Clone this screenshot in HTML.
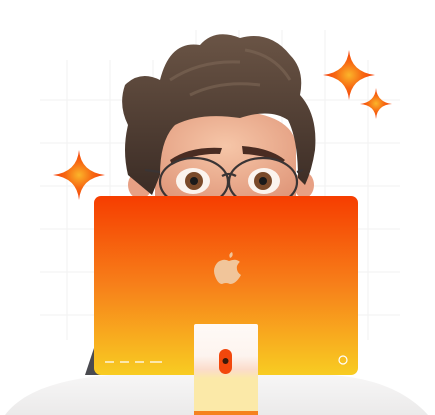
<!DOCTYPE html>
<html><head><style>html,body{margin:0;padding:0;background:#fff;width:435px;height:415px;overflow:hidden}</style></head>
<body>
<svg width="435" height="415" viewBox="0 0 435 415" xmlns="http://www.w3.org/2000/svg">
<defs>
<linearGradient id="mon" x1="0" y1="0" x2="0" y2="1"><stop offset="0" stop-color="#f63d00"/><stop offset="0.5" stop-color="#f7801a"/><stop offset="1" stop-color="#f8cc22"/></linearGradient>
<linearGradient id="st" x1="0" y1="0" x2="0" y2="1"><stop offset="0" stop-color="#fffaf7"/><stop offset="0.35" stop-color="#fdf4ef"/><stop offset="0.5" stop-color="#fbdccb"/><stop offset="0.6" stop-color="#fbe9a8"/><stop offset="1" stop-color="#fbe9a8"/></linearGradient>
<radialGradient id="sp"><stop offset="0" stop-color="#fbb52a"/><stop offset="0.5" stop-color="#f76a12"/><stop offset="1" stop-color="#f43c08"/></radialGradient>
<radialGradient id="skin" cx="0.5" cy="0.4" r="0.7"><stop offset="0" stop-color="#f6c6a8"/><stop offset="1" stop-color="#e0977a"/></radialGradient>
<linearGradient id="hair" x1="0" y1="0" x2="0" y2="1"><stop offset="0" stop-color="#6a5445"/><stop offset="1" stop-color="#3b2c25"/></linearGradient>
<linearGradient id="desk" x1="0" y1="0" x2="0" y2="1"><stop offset="0" stop-color="#f7f6f6"/><stop offset="1" stop-color="#ebeaea"/></linearGradient>
</defs>
<g stroke="#f3f3f3" stroke-width="1.2" fill="none">
<path d="M67 60V340M110 60V340M153 60V340M196 30V340M239 30V340M282 30V340M325 30V340M368 60V340"/>
<path d="M40 100H400M40 143H400M40 186H400M40 229H400M40 272H400M40 315H400"/>
</g>
<!-- desk -->
<path d="M5 415C20 395 50 380 110 375H330C380 378 410 395 428 415Z" fill="url(#desk)"/>
<path d="M85 375L95 345H110V375Z" fill="#4a4a50"/>
<ellipse cx="140" cy="185" rx="12" ry="14" fill="#e7a084"/>
<ellipse cx="304" cy="185" rx="10" ry="13" fill="#e7a084"/>
<path d="M155 140Q160 112 225 110Q292 112 296 145V200H155Z" fill="url(#skin)"/>
<path d="M125 85Q140 70 160 80Q170 40 200 45Q215 28 240 38Q270 30 290 55Q305 70 300 95Q318 115 315 150Q312 170 305 185L298 178Q298 140 288 120Q270 108 240 118Q200 112 175 125Q160 140 160 175L152 195Q140 185 128 175Q122 150 128 125Q118 105 125 85Z" fill="url(#hair)"/>
<path d="M170 80Q200 60 240 62M190 95Q220 80 260 85M245 50Q275 55 290 80" stroke="#7d6757" stroke-width="3" fill="none" opacity="0.6"/>
<path d="M170 160Q190 146 222 148L220 154Q195 153 172 165Z" fill="#4a2c22"/>
<path d="M242 146Q270 148 285 160L282 163Q265 155 243 154Z" fill="#4a2c22"/>
<ellipse cx="193" cy="181" rx="17" ry="13" fill="#fbf4ee"/>
<ellipse cx="264" cy="181" rx="16" ry="13" fill="#fbf4ee"/>
<circle cx="194" cy="181" r="9" fill="#7a4a2a"/><circle cx="194" cy="181" r="4" fill="#1a1a1a"/>
<circle cx="263" cy="181" r="9" fill="#7a4a2a"/><circle cx="263" cy="181" r="4" fill="#1a1a1a"/>
<g stroke="#3a3434" stroke-width="2.2" fill="none">
<ellipse cx="194" cy="182" rx="34" ry="24"/>
<ellipse cx="263" cy="182" rx="34" ry="24"/>
<path d="M222 176Q229 172 236 176M160 172L145 170M297 172L303 170"/>
</g>
<g fill="url(#sp)">
<path d="M349 50Q351 72 375 75Q351 78 349 100Q347 78 323 75Q347 72 349 50Z"/>
<path d="M376 88Q377 102 392 104Q377 105 376 119Q375 105 360 104Q375 102 376 88Z"/>
<path d="M79 150Q81 172 105 175Q81 178 79 200Q77 178 53 175Q77 172 79 150Z"/>
</g>
<rect x="94" y="196" width="264" height="179" rx="7" fill="url(#mon)"/>
<path d="M232 252Q234 256 230 258Q228 254 232 252ZM229 261Q224 258 218 262Q212 268 215 276Q218 284 222 284Q226 282 230 284Q236 284 241 275Q236 272 237 266Q239 262 240 262Q236 258 229 261Z" fill="#f1c59a"/>
<g stroke="#fff" stroke-width="1.2"><path d="M105 362H114M120 362H129M135 362H144M150 362H162"/></g>
<circle cx="343" cy="360" r="4" stroke="#fff" stroke-width="1.2" fill="none"/>
<rect x="194" y="324" width="64" height="91" rx="2" fill="url(#st)"/>
<rect x="194" y="411" width="64" height="4" fill="#f5821e"/>
<rect x="219" y="349" width="13" height="25" rx="6.5" fill="#f2470c"/>
<circle cx="225.5" cy="361" r="3" fill="#3a1a0a"/>
</svg>
</body></html>
